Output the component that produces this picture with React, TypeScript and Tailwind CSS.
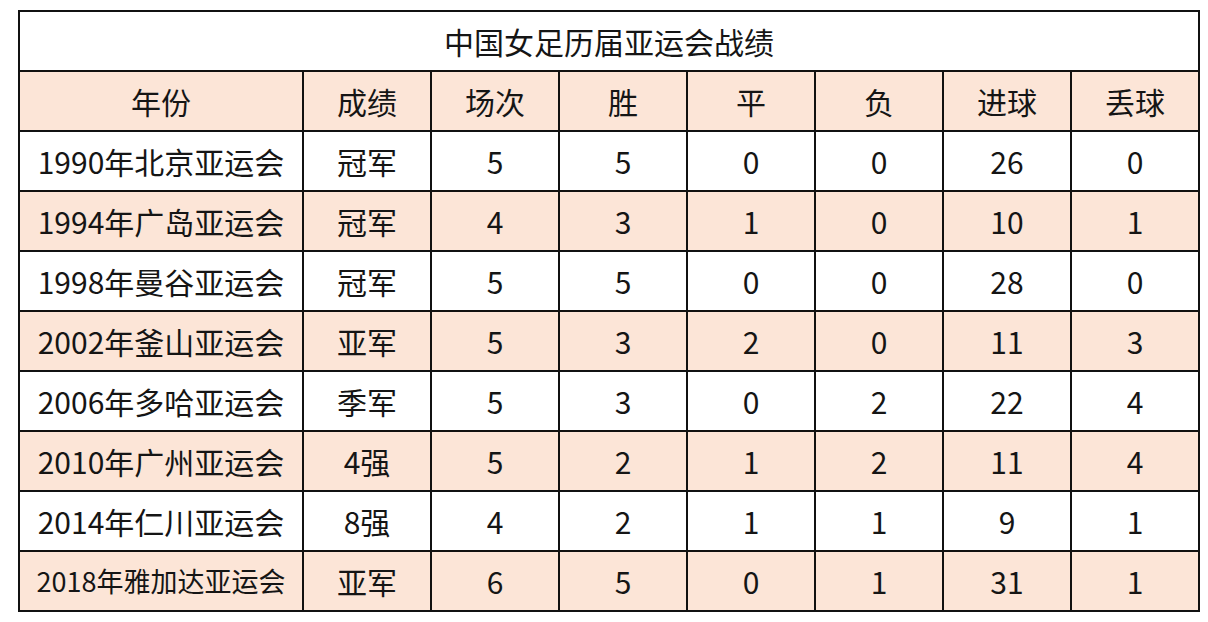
const headers = ['年份', '成绩', '场次', '胜', '平', '负', '进球', '丢球'];

const rows: string[][] = [
  ['1990年北京亚运会', '冠军', '5', '5', '0', '0', '26', '0'],
  ['1994年广岛亚运会', '冠军', '4', '3', '1', '0', '10', '1'],
  ['1998年曼谷亚运会', '冠军', '5', '5', '0', '0', '28', '0'],
  ['2002年釜山亚运会', '亚军', '5', '3', '2', '0', '11', '3'],
  ['2006年多哈亚运会', '季军', '5', '3', '0', '2', '22', '4'],
  ['2010年广州亚运会', '4强', '5', '2', '1', '2', '11', '4'],
  ['2014年仁川亚运会', '8强', '4', '2', '1', '1', '9', '1'],
  ['2018年雅加达亚运会', '亚军', '6', '5', '0', '1', '31', '1'],
];

const cell = 'flex h-[60px] items-center justify-center border-r-2 border-b-2 border-[#111]';

export default function App() {
  return (
    <div className="h-[622px] w-[1208px] bg-white pt-[10px] pl-[18px] text-[#151515] [font-family:'Noto_Sans_CJK_SC','Noto_Sans',sans-serif]">
      <div className="grid w-[1182px] grid-cols-[284px_repeat(7,128px)] border-t-2 border-l-2 border-[#111]">
        <div className="col-span-8 flex h-[60px] items-center justify-center border-r-2 border-b-2 border-[#111] text-[30px]">
          中国女足历届亚运会战绩
        </div>
        {headers.map((h) => (
          <div key={h} className={`${cell} bg-[#fce5d7] text-[30px]`}>
            {h}
          </div>
        ))}
        {rows.map((r, i) =>
          r.map((v, j) => (
            <div
              key={`${i}-${j}`}
              className={`${cell} ${i % 2 === 1 ? 'bg-[#fce5d7]' : 'bg-white'} ${
                j === 0 && i === 7 ? 'text-[27px]' : 'text-[30px]'
              }`}
            >
              {v}
            </div>
          ))
        )}
      </div>
    </div>
  );
}
